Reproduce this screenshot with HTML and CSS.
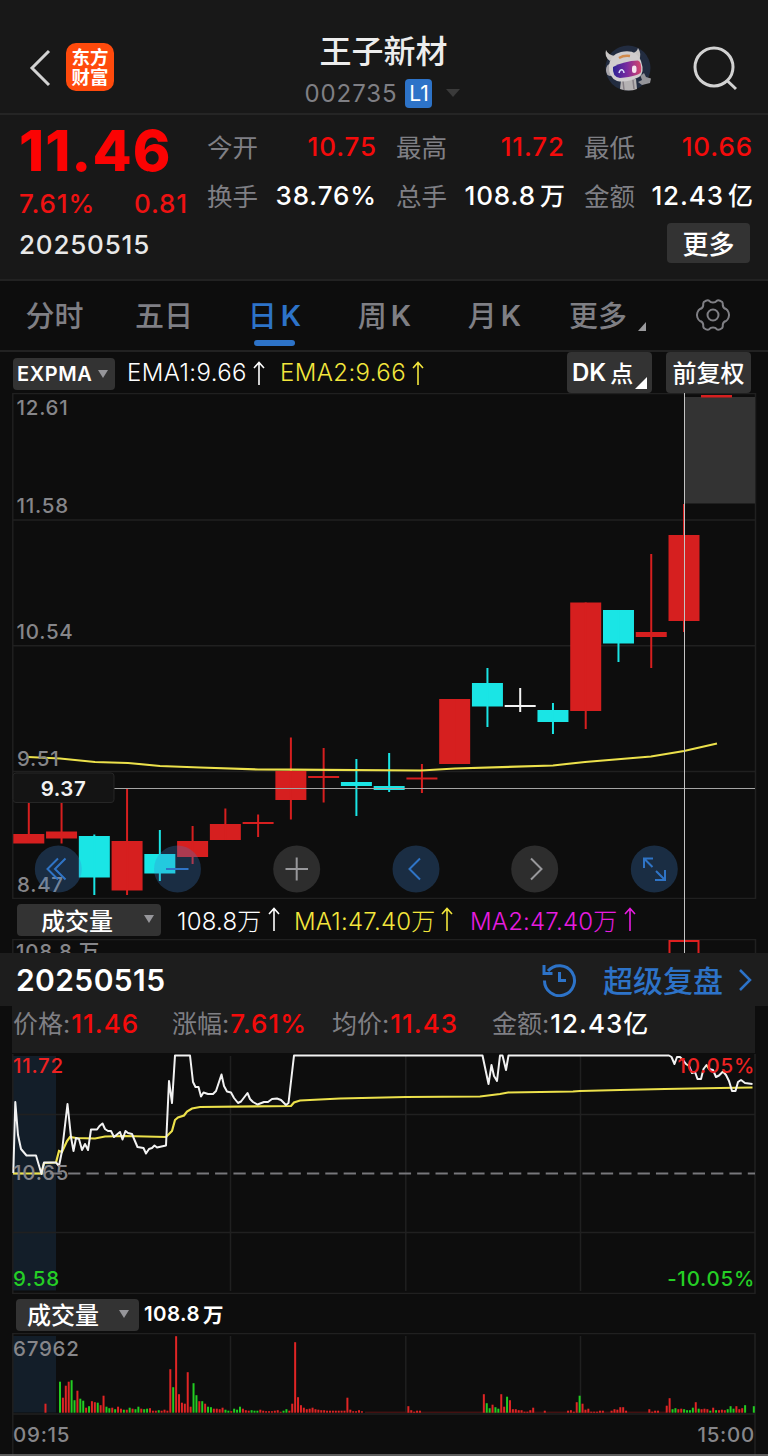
FILE: index.html
```html
<!DOCTYPE html>
<html lang="zh-CN">
<head>
    <meta charset="UTF-8">
    <meta name="viewport" content="width=device-width, initial-scale=1.0">
    <title>王子新材 002735</title>
    <link rel="stylesheet" href="styles.css">
</head>
<body>
    <header class="topbar">
        <div class="topbar-left">
            <svg class="back" width="22" height="38" viewBox="0 0 22 38"><path d="M20 2 L3 19 L20 36"/></svg>
            <div class="logo"><span>东方</span><span>财富</span></div>
        </div>
        <div class="topbar-title">
            <h1>王子新材</h1>
            <div class="code"><span>002735</span><b class="level">L1</b><i class="caret"></i></div>
        </div>
        <div class="topbar-right">
            <svg class="robot" width="52" height="52" viewBox="0 0 52 52">
                <defs>
                    <linearGradient id="visor" x1="0" x2="1" y1="0" y2="0">
                        <stop offset="0" stop-color="#2b2394"/>
                        <stop offset=".5" stop-color="#7a2aa0"/>
                        <stop offset="1" stop-color="#d5466a"/>
                    </linearGradient>
                </defs>
                <circle cx="26" cy="26" r="22.5" fill="#222c40"/>
                <path d="M19 38 L34 37 L35 47 Q27 50 18 47 Z" fill="#b5b2b3"/>
                <path d="M21 39 L22 48 M31 38 L32 47" stroke="#857f85" stroke-width="1.5"/>
                <path d="M36 40 L40 38 L38.5 34 L42 31 L44 35 L49 36.5 L48 41 L40 43 Z" fill="#95959a"/>
                <path d="M8 19 Q2 15 4 8 Q6 13 13 14 Z M31 11 Q35 10 36 6 Q40 12 37 18 Z" fill="#c9c6c5"/>
                <ellipse cx="8" cy="28" rx="4" ry="6" fill="#a9a6aa"/>
                <path d="M7 23 Q9 11 22 9.5 Q35 8 39 19 Q43 31 37 35 Q25 41 15 39 Q6 35 7 23 Z" fill="#d0cdce"/>
                <path d="M11 25 Q22 19 36 18.5 Q40 20 39 30 Q37 34 18 36 Q10 35 11 25 Z" fill="url(#visor)"/>
                <path d="M17 31 Q18 27 20.5 28 Q22 29 22 31" fill="none" stroke="#dce3ff" stroke-width="1.5"/>
                <rect x="30" y="23.5" width="4.5" height="7.5" rx="2.2" fill="#f5e4ee"/>
                <path d="M17 16 Q22 13 28 14" stroke="#d18a4c" stroke-width="2.5" fill="none"/>
            </svg>
            <svg class="search" width="46" height="46" viewBox="0 0 46 46"><circle cx="21" cy="21" r="19"/><path d="M34 34.5 L43 43"/></svg>
        </div>
    </header>

    <section class="quote">
        <div class="price-box">
            <div class="price">11.46</div>
            <div class="change"><span>7.61%</span><span>0.81</span></div>
        </div>
        <dl class="facts">
            <div class="fact"><dt>今开</dt><dd class="up">10.75</dd></div>
            <div class="fact"><dt>最高</dt><dd class="up">11.72</dd></div>
            <div class="fact"><dt>最低</dt><dd class="up">10.66</dd></div>
            <div class="fact"><dt>换手</dt><dd>38.76%</dd></div>
            <div class="fact"><dt>总手</dt><dd>108.8<em>万</em></dd></div>
            <div class="fact"><dt>金额</dt><dd>12.43<em>亿</em></dd></div>
        </dl>
        <div class="quote-foot"><span>20250515</span><button class="more">更多</button></div>
    </section>

    <nav class="tabs">
        <a class="tab">分时</a>
        <a class="tab">五日</a>
        <a class="tab active">日<span>K</span></a>
        <a class="tab">周<span>K</span></a>
        <a class="tab">月<span>K</span></a>
        <a class="tab tab-more">更多<i class="corner"></i></a>
        <a class="tab">
            <svg class="gear" width="36" height="36" viewBox="0 0 36 36">
                <path d="M18 5.5 Q20.5 5.5 21.8 3.8 Q23.5 2.3 27.2 5 Q28 6.3 27.8 8.5 Q28.2 11.3 31 12 Q32.5 12.6 33.6 15.5 Q34.5 18 33.6 20.5 Q32.5 23.4 31 24 Q28.2 24.7 27.8 27.5 Q28 29.7 27.2 31 Q23.5 33.7 21.8 32.2 Q20.5 30.5 18 30.5 Q15.5 30.5 14.2 32.2 Q12.5 33.7 8.8 31 Q8 29.7 8.2 27.5 Q7.8 24.7 5 24 Q3.5 23.4 2.4 20.5 Q1.5 18 2.4 15.5 Q3.5 12.6 5 12 Q7.8 11.3 8.2 8.5 Q8 6.3 8.8 5 Q12.5 2.3 14.2 3.8 Q15.5 5.5 18 5.5 Z"/>
                <circle cx="18" cy="18" r="5.5"/>
            </svg>
        </a>
    </nav>

    <main class="daily">
        <div class="indicator">
            <button class="pill expma">EXPMA<i class="down"></i></button>
            <span class="ema1">EMA1:9.66<svg class="arrow" width="12" height="24" viewBox="0 0 12 24"><path d="M6 24 V1.5 M1 7 L6 1.5 L11 7"/></svg></span>
            <span class="ema2">EMA2:9.66<svg class="arrow" width="12" height="24" viewBox="0 0 12 24"><path d="M6 24 V1.5 M1 7 L6 1.5 L11 7"/></svg></span>
            <button class="pill dk">DK<em>点</em><i class="corner"></i></button>
            <button class="pill fq">前复权</button>
        </div>

        <svg class="chart" id="kline" width="768" height="506" viewBox="0 393 768 506">
            <path class="grid" d="M12.8 393.5 H755.5 V898.5 H12.8 Z M13 520 H755 M13 645.7 H755 M13 771.5 H755"/>
            <rect x="685" y="397" width="70" height="106.5" fill="#333"/>
            <rect x="701" y="395" width="31" height="2.5" fill="#d61f1f"/>
            <g id="candles"></g>
            <path class="avg" d="M28 757 L60 758.5 L95 762 L128 763 L160 766 L200 767.5 L258 769.5 L290 769.7 L421 770.5 L455 768.5 L553 765.5 L585 762 L651 756.5 L684 751 L717 743.5"/>
            <g class="axis">
                <text x="16.5" y="415">12.61</text>
                <text x="16.5" y="513">11.58</text>
                <text x="16.5" y="639">10.54</text>
                <text x="17" y="766">9.51</text>
                <text x="17" y="892">8.47</text>
            </g>
            <path d="M114 788.5 H755" stroke="#a5a5a5" stroke-width="1.2"/>
            <rect x="13" y="773" width="101" height="29.5" rx="3" fill="#141414" stroke="#262626"/>
            <text class="cursor-price" x="63.5" y="796" text-anchor="middle">9.37</text>
            <g class="blue-btn">
                <circle cx="58.3" cy="869" r="23.5"/><path d="M58 858.5 L47.5 869 L58 879.5 M65.5 858.5 L55 869 L65.5 879.5"/>
                <circle cx="177.5" cy="869" r="23.5"/><path d="M166 869 H188.5"/>
                <circle cx="416" cy="869" r="23.5"/><path d="M420 858.5 L409.5 869 L420 879.5"/>
                <circle cx="654.3" cy="869" r="23.5"/><path d="M644 868 V858.5 H653 M644 858.5 L652.5 867 M656 871 L665 880 M655 880 H665 V870"/>
            </g>
            <g class="gray-btn">
                <circle cx="296.7" cy="869" r="23.5"/><path d="M285.5 869 H308 M296.7 857.5 V880.5"/>
                <circle cx="534.7" cy="869" r="23.5"/><path d="M531 858.5 L541.5 869 L531 879.5"/>
            </g>
        </svg>

        <div class="indicator volume-row">
            <button class="pill vol">成交量<i class="down"></i></button>
            <span class="v0">108.8万<svg class="arrow" width="12" height="24" viewBox="0 0 12 24"><path d="M6 24 V1.5 M1 7 L6 1.5 L11 7"/></svg></span>
            <span class="v1">MA1:47.40万<svg class="arrow" width="12" height="24" viewBox="0 0 12 24"><path d="M6 24 V1.5 M1 7 L6 1.5 L11 7"/></svg></span>
            <span class="v2">MA2:47.40万<svg class="arrow" width="12" height="24" viewBox="0 0 12 24"><path d="M6 24 V1.5 M1 7 L6 1.5 L11 7"/></svg></span>
        </div>
        <svg class="chart" width="768" height="14" viewBox="0 939 768 14">
            <path class="grid" d="M12.8 960 V939.5 H755.5 V960"/>
            <text class="axis-text" x="16" y="959">108.8 万</text>
            <path d="M669.5 960 V941 H698.5 V960" fill="none" stroke="#e02020" stroke-width="2"/>
        </svg>
        <div class="crosshair"></div>
    </main>

    <section class="replay">
        <div class="replay-head">
            <span class="date">20250515</span>
            <svg class="clock" width="36" height="36" viewBox="0 0 36 36"><path d="M3.5 19.5 A15 15 0 1 0 7 10 M3 4 V12.5 H11.5 M18.5 11 V19.5 H25"/></svg>
            <span class="link">超级复盘</span>
            <svg class="go" width="14" height="24" viewBox="0 0 14 24"><path d="M2 2 L12 12 L2 22"/></svg>
        </div>
        <div class="replay-stats">
            <span>价格:<b class="up">11.46</b></span>
            <span>涨幅:<b class="up">7.61%</b></span>
            <span>均价:<b class="up">11.43</b></span>
            <span>金额:<b>12.43<em>亿</em></b></span>
        </div>
    </section>

    <section class="intraday">
        <svg class="chart" width="768" height="241" viewBox="0 1053 768 241">
            <rect x="13" y="1056" width="43" height="234.5" fill="#131e29"/>
            <path class="grid" d="M12.8 1054 V1293.5 H755 V1054 M13 1114.5 H755 M13 1232.5 H755 M230.5 1056 V1291 M405.8 1056 V1291 M580.5 1056 V1291"/>
            <path d="M13 1173.5 H755" stroke="#77777b" stroke-width="1.8" stroke-dasharray="12.3 6.07"/>
            <path class="avg" d="M13 1173.5 H41.5 L44 1163 L56 1162.5 L59 1151 L62 1152 L67 1141 L70 1137 L76 1138 L95 1138.5 L105 1136.5 L125 1136 L166 1137 L172 1131 L175 1120 L178 1117.5 L184 1115.5 L187 1111.5 L192 1108.5 L200 1107 L291 1106 L294 1102.5 L300 1100.5 L340 1098.5 L406 1097 L480 1096.5 L500 1094 L508 1092.5 L573 1091.5 L580 1091 L620 1090 L665 1089 L720 1088 L752.5 1087.5"/>
            <path class="price-line" d="M13.3 1173 L15.3 1102 L18 1135 L21 1149 L26.5 1155.5 L36 1155.5 L41.5 1174 L44 1162.5 L56 1162.5 L59 1166 L62 1151 L67.5 1104 L71 1137 L73.5 1151 L76 1138 L79 1139 L82 1150 L85 1144 L88 1150 L91 1129.5 L97 1129.5 L99.5 1126 L102.5 1123.5 L105 1129 L108 1131 L111 1131 L114 1137 L120 1132 L122.5 1139.5 L125.5 1131 L128 1133 L132 1134 L134.5 1140 L137.5 1147 L143.5 1148 L146 1153.5 L149 1149 L152 1148 L154.5 1145.5 L157 1147.5 L166 1145.5 L169 1081 L172 1103 L175 1055.5 L190 1055.5 L193 1082 L195.5 1087 L198.5 1087 L201 1096.5 L203.5 1092.5 L208 1094 L213 1094 L216 1091 L221.5 1074.5 L224 1086 L227 1091.5 L231 1092.5 L234 1098 L238 1103 L241 1101.5 L247.5 1093 L250 1099 L253 1102 L257.5 1104.5 L264 1102 L268 1102 L272 1099 L277 1098.5 L281 1100 L286 1105 L288.5 1103 L294 1055.5 L482.5 1055.5 L488.5 1084 L491.5 1065 L494 1076 L497 1081 L500 1055.5 L502.5 1055.5 L506 1070 L508.5 1055.5 L669 1055.5 L671.5 1057 L674.5 1064 L677 1057 L680 1057 L683 1060 L686 1064 L689 1066 L692 1073 L695 1072 L697.5 1079 L701 1079 L703.5 1069 L706.5 1065 L709 1069 L713 1070 L716 1077 L719 1075.5 L723 1071.5 L726 1075 L729 1081 L732 1091 L735.5 1091 L738 1082 L741 1080 L745 1083 L752.5 1084"/>
            <g class="axis">
                <text class="t-up" x="13" y="1073">11.72</text>
                <text class="t-up" x="755" y="1073" text-anchor="end">10.05%</text>
                <text x="13" y="1180">10.65</text>
                <text class="t-down" x="13" y="1286">9.58</text>
                <text class="t-down" x="755" y="1286" text-anchor="end">-10.05%</text>
            </g>
        </svg>
        <div class="indicator intraday-row">
            <button class="pill vol2">成交量<i class="down"></i></button>
            <span class="total">108.8<em>万</em></span>
        </div>
        <svg class="chart" width="768" height="123" viewBox="0 1333 768 123">
            <rect x="13" y="1336" width="43" height="76.5" fill="#131e29"/>
            <path class="grid" d="M12.8 1456 V1333.5 H755 V1456 M13 1414 H755 M230.5 1336 V1412 M405.8 1336 V1412 M580.5 1336 V1412"/>
            <g id="bars"></g>
            <g class="axis">
                <text x="13" y="1356">67962</text>
                <text x="13" y="1442">09:15</text>
                <text x="755" y="1442" text-anchor="end">15:00</text>
            </g>
            <path d="M0 1455 H768" stroke="#777" stroke-width="1.5"/>
        </svg>
    </section>
    <script src="chart.js"></script>
</body>
</html>
```
FILE: styles.css
```css
* {
    box-sizing: border-box;
}
body {
    margin: 0;
    width: 768px;
    height: 1456px;
    overflow: hidden;
    background-color: #0d0d0d;
    color: #fff;
    font-family: Inter, "Noto Sans CJK SC", sans-serif;
}
h1, dl, dd {
    margin: 0;
}
em, i {
    font-style: normal;
}
button {
    border: none;
    padding: 0;
    color: #fff;
    font-family: inherit;
    background-color: #333;
}
svg {
    display: block;
    flex: none;
}
.up {
    color: #f40b0b;
}

/* header */
.topbar {
    display: grid;
    grid-template-columns: 1fr 180px 1fr;
    height: 115px;
    padding: 31px 29px 0 28px;
    background-color: #181818;
    border-bottom: 2px solid #252525;
}
.topbar-left {
    display: flex;
    gap: 15px;
    padding: 12px 0 0 1px;
}
.back {
    margin-top: 6px;
}
.back path, .search {
    fill: none;
    stroke: #d2d2d2;
    stroke-width: 3;
}
.logo {
    display: flex;
    flex-direction: column;
    justify-content: center;
    align-items: center;
    width: 48px;
    height: 48px;
    border-radius: 10px;
    background-color: #ff4a0c;
    font-size: 18.5px;
    font-weight: 700;
    line-height: 20px;
}
.topbar-title {
    text-align: center;
}
.topbar-title h1 {
    font-size: 32px;
    font-weight: 500;
    line-height: 41px;
    color: #ededed;
}
.code {
    display: flex;
    align-items: center;
    justify-content: center;
    height: 42px;
    margin-left: -2px;
    font-size: 24px;
    letter-spacing: .9px;
    color: #7f7f84;
}
.level {
    width: 27px;
    height: 29px;
    margin: 0 14px 0 8px;
    border-radius: 4px;
    background-color: #2d73c8;
    color: #fff;
    font-size: 21px;
    font-weight: 400;
    line-height: 29px;
    letter-spacing: 0;
}
.caret {
    border: 7px solid transparent;
    border-top: 8px solid #3a3a3a;
    border-bottom: 0;
}
.topbar-right {
    display: flex;
    justify-content: flex-end;
    gap: 39px;
    padding-top: 11px;
}
.search {
    margin-top: 4px;
}

/* quote */
.quote {
    display: grid;
    grid-template-columns: 168px 545px;
    grid-template-rows: 107px 1fr;
    column-gap: 20px;
    height: 166px;
    padding: 0 16px 0 19px;
    background-color: #181818;
    border-bottom: 2px solid #222;
}
.price {
    height: 70px;
    font-size: 57px;
    font-weight: 800;
    line-height: 71px;
    letter-spacing: 1px;
    color: #fb0303;
}
.change {
    display: flex;
    justify-content: space-between;
    color: #ee1212;
    font-size: 26px;
    font-weight: 500;
    line-height: 38px;
    letter-spacing: .9px;
    margin-right: -1px;
}
.facts {
    display: grid;
    grid-template-columns: 169px 168px 168px;
    column-gap: 20px;
    grid-auto-rows: 49px;
    padding-top: 7px;
}
.fact {
    display: flex;
    justify-content: space-between;
    align-items: center;
    white-space: nowrap;
}
.fact dt {
    margin-top: -3px;
    font-size: 25.5px;
    color: #7f7f84;
}
.fact dd {
    margin: 0 -1px 0 0;
    font-size: 26px;
    font-weight: 500;
    line-height: 36px;
    letter-spacing: .9px;
}
.fact em {
    margin-left: 4px;
    font-size: 25px;
    letter-spacing: 0;
}
.quote-foot {
    grid-column: 1 / 3;
    display: flex;
    justify-content: space-between;
    align-items: flex-start;
    padding-right: 2px;
    font-size: 26px;
    font-weight: 500;
    line-height: 46px;
    letter-spacing: .8px;
    color: #e8e8e8;
}
.more {
    width: 83px;
    height: 40px;
    margin-top: 1px;
    padding-bottom: 2px;
    border-radius: 4px;
    font-size: 26px;
    font-weight: 500;
}

/* tabs */
.tabs {
    display: grid;
    grid-template-columns: 109px 110px 111px 109px 111px 108px 110px;
    height: 71px;
    border-bottom: 2px solid #222;
    color: #7f7f84;
    font-size: 29px;
    font-weight: 500;
    line-height: 67px;
}
.tab {
    position: relative;
    display: flex;
    justify-content: center;
    align-items: center;
    height: 69px;
    padding-top: 1px;
}
.tab span {
    margin: -2px 0 0 4px;
    font-weight: 600;
}
.tab.active {
    color: #2d73c8;
}
.tab.active::after {
    content: "";
    position: absolute;
    left: 35px;
    bottom: 4px;
    width: 41px;
    height: 6px;
    border-radius: 3px;
    background-color: #2d73c8;
}
.tab-more {
    padding-right: 12px;
}
.corner {
    position: absolute;
    right: 12px;
    bottom: 19px;
    border-left: 8px solid transparent;
    border-bottom: 9px solid #9a9a9d;
}
.gear {
    margin-top: -2px;
    fill: none;
    stroke: #7f7f84;
    stroke-width: 2;
}

/* daily chart */
.daily {
    position: relative;
}
.indicator {
    display: flex;
    align-items: center;
    height: 41px;
    font-size: 24px;
    white-space: nowrap;
}
.indicator span {
    display: flex;
    align-items: center;
    font-weight: 300;
    letter-spacing: .4px;
}
.arrow {
    margin-left: 6px;
    fill: none;
    stroke: currentColor;
    stroke-width: 1.6;
}
.pill {
    position: relative;
    flex: none;
    display: flex;
    align-items: center;
    height: 32px;
    border-radius: 4px;
    font-size: 24px;
    font-weight: 500;
}
.down {
    border: 5px solid transparent;
    border-top: 8px solid #96969a;
    border-bottom: 0;
}
.expma {
    width: 102px;
    margin: 2px 12px 0 13px;
    padding-left: 4px;
    gap: 6px;
    font-size: 20px;
    font-weight: 600;
    letter-spacing: .6px;
}
.ema1 {
    width: 153px;
}
.ema2, .v1 {
    color: #f3e63c;
}
.dk, .fq {
    height: 41px;
    width: 85px;
    padding-bottom: 1px;
}
.dk {
    margin: 0 14px 0 auto;
    padding-left: 5px;
    font-weight: 600;
}
.dk em {
    margin-left: 4px;
    font-size: 23px;
    font-weight: 500;
}
.dk .corner {
    right: 5px;
    bottom: 4px;
    border-left-width: 12px;
    border-bottom: 12px solid #fff;
}
.fq {
    margin-right: 17px;
    padding-bottom: 3px;
    justify-content: center;
}
.chart {
    overflow: hidden;
}
.grid {
    fill: none;
    stroke: #202020;
    stroke-width: 1.5;
}
.avg {
    fill: none;
    stroke: #ece14b;
    stroke-width: 2.2;
}
.axis text, .axis-text {
    fill: #86868a;
    font-size: 20.5px;
    font-weight: 500;
    letter-spacing: .75px;
}
.axis .t-up {
    fill: #ee2222;
}
.axis .t-down {
    fill: #25cf25;
}
.cursor-price {
    fill: #f2f2f2;
    font-size: 20.5px;
    font-weight: 600;
    letter-spacing: .5px;
}
.blue-btn circle {
    fill: #3c82d2;
    fill-opacity: .28;
}
.gray-btn circle {
    fill: #787878;
    fill-opacity: .3;
}
.blue-btn path, .gray-btn path {
    fill: none;
    stroke: #2f74c6;
    stroke-width: 2;
}
.gray-btn path {
    stroke: #98989b;
}
.volume-row {
    height: 40px;
}
.indicator.volume-row span {
    letter-spacing: .2px;
}
.vol, .vol2 {
    padding-bottom: 2px;
}
.vol {
    width: 144px;
    margin: 2px 16px 0 17px;
    padding-left: 24px;
    gap: 31px;
}
.v0 {
    width: 117px;
}
.v1 {
    width: 176px;
}
.v2 {
    color: #e81ce0;
}
.crosshair {
    position: absolute;
    left: 684px;
    top: 41px;
    bottom: 0;
    width: 1px;
    background-color: #c4c4c4;
}

/* replay panel */
.replay-head {
    display: flex;
    align-items: center;
    height: 53px;
    padding: 0 16px;
    background-color: #1d1d1d;
    color: #2d73c8;
    font-size: 30px;
}
.date {
    margin-right: auto;
    color: #fff;
    font-size: 30px;
    font-weight: 600;
    letter-spacing: .4px;
}
.clock, .go {
    fill: none;
    stroke: #2d73c8;
    stroke-width: 3;
}
.clock {
    margin-top: -2px;
}
.go {
    margin-left: 15px;
    stroke-width: 2.5;
}
.link {
    margin: -2px 0 0 26px;
    font-weight: 500;
}
.replay-stats {
    display: grid;
    grid-template-columns: 159px 160px 160px 1fr;
    width: 743px;
    height: 47px;
    margin-left: 12px;
    padding-left: 1px;
    background-color: #1d1d1d;
    color: #7f7f84;
    font-size: 25px;
    line-height: 36px;
    white-space: nowrap;
}
.replay-stats b {
    margin-left: 1px;
    font-size: 26px;
    font-weight: 500;
    letter-spacing: 1px;
}
.replay-stats em {
    font-size: 25px;
}
.replay-stats b:not(.up) {
    color: #fff;
}

/* intraday */
.price-line {
    fill: none;
    stroke: #f2f2f2;
    stroke-width: 2;
    stroke-linejoin: round;
}
.intraday-row {
    height: 39px;
}
.vol2 {
    width: 123px;
    margin: 2px 5px 0 16px;
    padding-left: 11px;
    gap: 20px;
}
.indicator .total {
    font-size: 20.5px;
    font-weight: 600;
}
.total em {
    margin-left: 3px;
}
```
FILE: chart.js
```js
const RED = '#d61f1f';
const CYAN = '#1ae5e5';
const WHITE = '#f4f4f4';

// color, body top, body bottom, wick top, wick bottom
const candles = [
    [RED, 834, 843.5, 800, 843],
    [RED, 831.5, 838.5, 800, 843.5],
    [CYAN, 836, 877.5, 834.5, 895],
    [RED, 841, 890.5, 789, 895],
    [CYAN, 854, 873.5, 830, 881],
    [RED, 841, 857, 826, 864],
    [RED, 824, 840, 808.5, 840],
    [RED, 822, 824, 814.5, 837],
    [RED, 771, 800, 737.5, 819.5],
    [RED, 776, 778, 748, 802.5],
    [CYAN, 782, 786, 759, 816],
    [CYAN, 786, 790, 753, 792],
    [RED, 777.5, 779.5, 764, 793],
    [RED, 699, 764, 699, 764],
    [CYAN, 683, 706.5, 668, 727],
    [WHITE, 705, 707, 688, 712],
    [CYAN, 710, 722, 703, 734],
    [RED, 602.5, 711, 602.5, 729],
    [CYAN, 610, 643.5, 610, 662],
    [RED, 632, 637, 554, 668],
    [RED, 535, 621, 504, 632]
];

let out = '';
candles.forEach(function (c, i) {
    const x = 28.8 + i * 32.76;
    out += `<rect x="${x - 15.5}" y="${c[1]}" width="31" height="${c[2] - c[1]}" fill="${c[0]}"/>`;
    out += `<rect x="${x - 1}" y="${c[3]}" width="2" height="${c[4] - c[3]}" fill="${c[0]}"/>`;
});
document.getElementById('candles').innerHTML = out;

// runs of minute volumes, keyed by the first minute; negative = falling
const volumes = {
    '-5': [9],
    0: [-31, 15, 27, 31, -32.5, -12.5, 22, -14, -12, 5, -6.5, 11.5, 10.5, -10, 7.5, 17, -6, -4.5, 5, -3.5, 6, 4, -3, 3, -5, 4, -3.5, -6, 4, -3.5, -4, 4.5, 2, 2, -2.5, 2, 3, 2],
    38: [43.5, -25.5, 76.5, 18.5, 10, 9, 40.5, 6, -29.5, -17.5, 11.5, -11.5, 9, -6, -5.5, 4, 4, 3.5, 5, -3, -2, 1.5, -4, -3, -6, 4, 2.5, 2, -2.5, -2, -2, 3, 2, 1.5, 1.5, 1.5, 2, 2.5, 1, -2, -3.5, 2],
    80: [9, 70.5, 15.5, 7.5, 5, 3.5, 4, 5, 3.5, 3, 2.5, 2.5, 2, 2, 2, 2, 2, 2, 2, 15, 3, 1.5, 1.5, 2.5, 1.5],
    120: [6.5, 2.5, 1, 2, 2],
    146: [18.5, -9.5, -4.5, 8, -5.5, -4, 18.5, 6, -16, 12.5, 3.5, 3.5, 2.5, 2.5, 1, 1, 2.5, 5],
    167: [2],
    175: [2, 2.5, 1, 10.5, -17, 9, 3, 4, 1, 1, 1, 2, 2],
    190: [2, 3.5, 3, 5.5, 5.5, 2],
    203: [3.5, 1, 2, 2],
    209: [7, 14.5, -3.5, -4.5, 3.5, 4, -3.5, -2.5, -2.5, -5, 10.5, -4, 3.5, 4, 3.5, -2, 5, -2.5, 2.5, 3, 2.5, -3.5, -6.5, -4, 6.5, 3.5, 4.5, -7.5],
    239: [-6.5]
};

out = '<rect x="365" y="1411.7" width="301" height="1" fill="#5c1515"/>';
for (const start in volumes) {
    volumes[start].forEach(function (v, i) {
        const x = 59 + (Number(start) + i) * 2.903;
        const h = Math.abs(v);
        out += `<rect x="${x}" y="${1412.7 - h}" width="2" height="${h}" fill="${v < 0 ? '#22cc22' : '#e02525'}"/>`;
    });
}
document.getElementById('bars').innerHTML = out;
```
